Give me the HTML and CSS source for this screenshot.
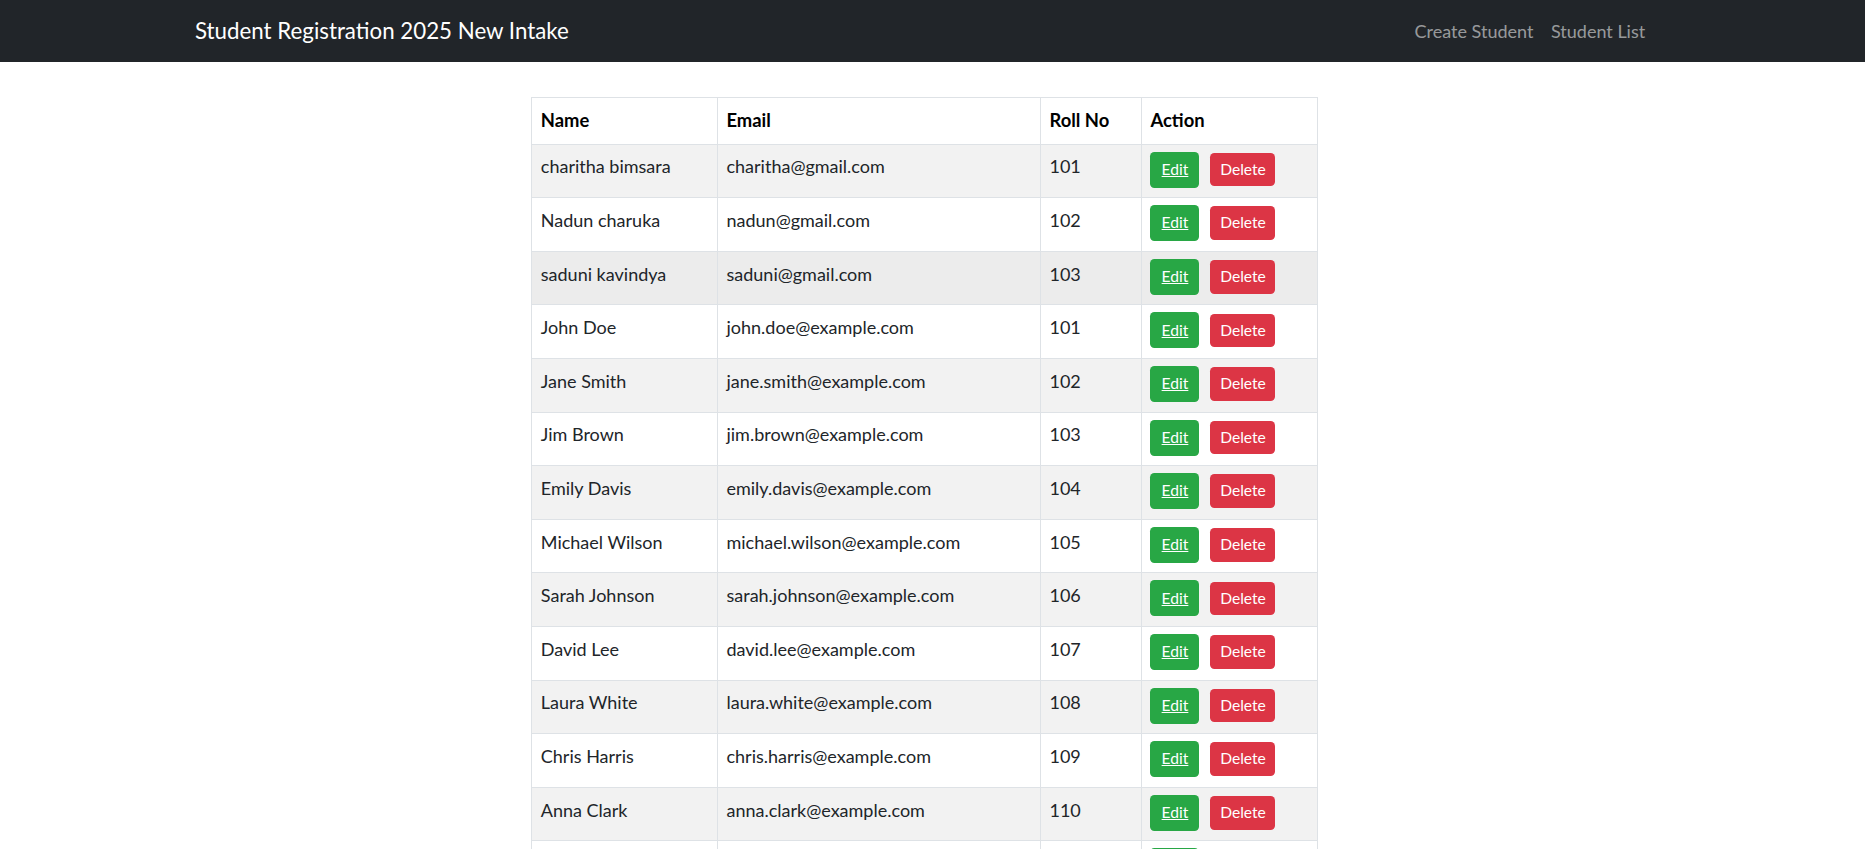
FILE: index.html
```html
<!DOCTYPE html>
<html lang="en">
<head>
<meta charset="utf-8">
<title>Student Registration 2025 New Intake</title>
<link rel="stylesheet" href="styles.css">
</head>
<body>
<nav class="navbar">
  <a class="brand" href="#">Student Registration 2025 New Intake</a>
  <div class="nav-links">
    <a class="nav-link" href="#">Create Student</a>
    <a class="nav-link" href="#">Student List</a>
  </div>
</nav>
<main class="content">
  <table class="students">
    <colgroup>
      <col class="c-name"><col class="c-email"><col class="c-roll"><col class="c-action">
    </colgroup>
    <thead>
      <tr><th>Name</th><th>Email</th><th>Roll No</th><th>Action</th></tr>
    </thead>
    <tbody>
      <tr class="odd"><td>charitha bimsara</td><td>charitha@gmail.com</td><td>101</td><td class="action"><div class="btns"><a class="btn btn-edit" href="#">Edit</a><button class="btn btn-delete">Delete</button></div></td></tr>
      <tr><td>Nadun charuka</td><td>nadun@gmail.com</td><td>102</td><td class="action"><div class="btns"><a class="btn btn-edit" href="#">Edit</a><button class="btn btn-delete">Delete</button></div></td></tr>
      <tr class="hover"><td>saduni kavindya</td><td>saduni@gmail.com</td><td>103</td><td class="action"><div class="btns"><a class="btn btn-edit" href="#">Edit</a><button class="btn btn-delete">Delete</button></div></td></tr>
      <tr><td>John Doe</td><td>john.doe@example.com</td><td>101</td><td class="action"><div class="btns"><a class="btn btn-edit" href="#">Edit</a><button class="btn btn-delete">Delete</button></div></td></tr>
      <tr class="odd"><td>Jane Smith</td><td>jane.smith@example.com</td><td>102</td><td class="action"><div class="btns"><a class="btn btn-edit" href="#">Edit</a><button class="btn btn-delete">Delete</button></div></td></tr>
      <tr><td>Jim Brown</td><td>jim.brown@example.com</td><td>103</td><td class="action"><div class="btns"><a class="btn btn-edit" href="#">Edit</a><button class="btn btn-delete">Delete</button></div></td></tr>
      <tr class="odd"><td>Emily Davis</td><td>emily.davis@example.com</td><td>104</td><td class="action"><div class="btns"><a class="btn btn-edit" href="#">Edit</a><button class="btn btn-delete">Delete</button></div></td></tr>
      <tr><td>Michael Wilson</td><td>michael.wilson@example.com</td><td>105</td><td class="action"><div class="btns"><a class="btn btn-edit" href="#">Edit</a><button class="btn btn-delete">Delete</button></div></td></tr>
      <tr class="odd"><td>Sarah Johnson</td><td>sarah.johnson@example.com</td><td>106</td><td class="action"><div class="btns"><a class="btn btn-edit" href="#">Edit</a><button class="btn btn-delete">Delete</button></div></td></tr>
      <tr><td>David Lee</td><td>david.lee@example.com</td><td>107</td><td class="action"><div class="btns"><a class="btn btn-edit" href="#">Edit</a><button class="btn btn-delete">Delete</button></div></td></tr>
      <tr class="odd"><td>Laura White</td><td>laura.white@example.com</td><td>108</td><td class="action"><div class="btns"><a class="btn btn-edit" href="#">Edit</a><button class="btn btn-delete">Delete</button></div></td></tr>
      <tr><td>Chris Harris</td><td>chris.harris@example.com</td><td>109</td><td class="action"><div class="btns"><a class="btn btn-edit" href="#">Edit</a><button class="btn btn-delete">Delete</button></div></td></tr>
      <tr class="odd"><td>Anna Clark</td><td>anna.clark@example.com</td><td>110</td><td class="action"><div class="btns"><a class="btn btn-edit" href="#">Edit</a><button class="btn btn-delete">Delete</button></div></td></tr>
      <tr><td class="empty"></td><td class="empty"></td><td class="empty"></td><td class="action"><div class="btns"><span class="btn btn-edit btn-stub"></span></div></td></tr>
    </tbody>
  </table>
</main>
</body>
</html>
```
FILE: styles.css
```css
html, body {
  margin: 0;
  padding: 0;
  overflow: hidden;
}
body {
  font-family: Lato, "Open Sans", "Noto Sans", sans-serif;
  font-size: 18px;
  line-height: 1.5;
  color: #212529;
  background: #fff;
}
a { text-decoration: none; }

.navbar {
  display: flex;
  align-items: center;
  justify-content: space-between;
  height: 61.6px;
  padding: 0 211px 0 195px;
  background: #212529;
}
.brand {
  font-size: 22.3px;
  line-height: 33px;
  color: #fff;
}
.nav-links {
  display: flex;
}
.nav-link {
  padding: 0 8.8px;
  font-size: 18px;
  line-height: 26.4px;
  color: rgba(255, 255, 255, 0.55);
}

.content {
  padding-top: 35px;
}
.students {
  margin-left: 531px;
  width: 786px;
  table-layout: fixed;
  border-collapse: collapse;
}
.c-name { width: 185.7px; }
.c-email { width: 323px; }
.c-roll { width: 101px; }
.c-action { width: 176.3px; }

.students th,
.students td {
  padding: 8.8px;
  border: 1px solid #dee2e6;
  vertical-align: top;
  text-align: left;
  line-height: 26.4px;
}
.students th {
  padding: 9.3px 8.8px 10.3px;
  font-size: 18.4px;
  font-weight: 700;
  color: #000;
}
.students tr.odd { background: #f2f2f2; }
.students tr.hover { background: #ececec; }

.students td.action {
  padding: 7px 8.8px 9.6px;
}
.btns {
  display: flex;
  align-items: center;
  gap: 11px;
}
.btn {
  display: inline-flex;
  align-items: center;
  justify-content: center;
  box-sizing: border-box;
  border: 0;
  border-radius: 4.4px;
  color: #fff;
  font-family: inherit;
  font-size: 15.6px;
  line-height: 1;
  padding: 0;
  cursor: pointer;
}
.btn-edit {
  width: 49px;
  height: 36px;
  background: #28a745;
  text-decoration: underline;
}
.btn-delete {
  width: 65px;
  height: 33.6px;
  background: #dc3545;
}
```
